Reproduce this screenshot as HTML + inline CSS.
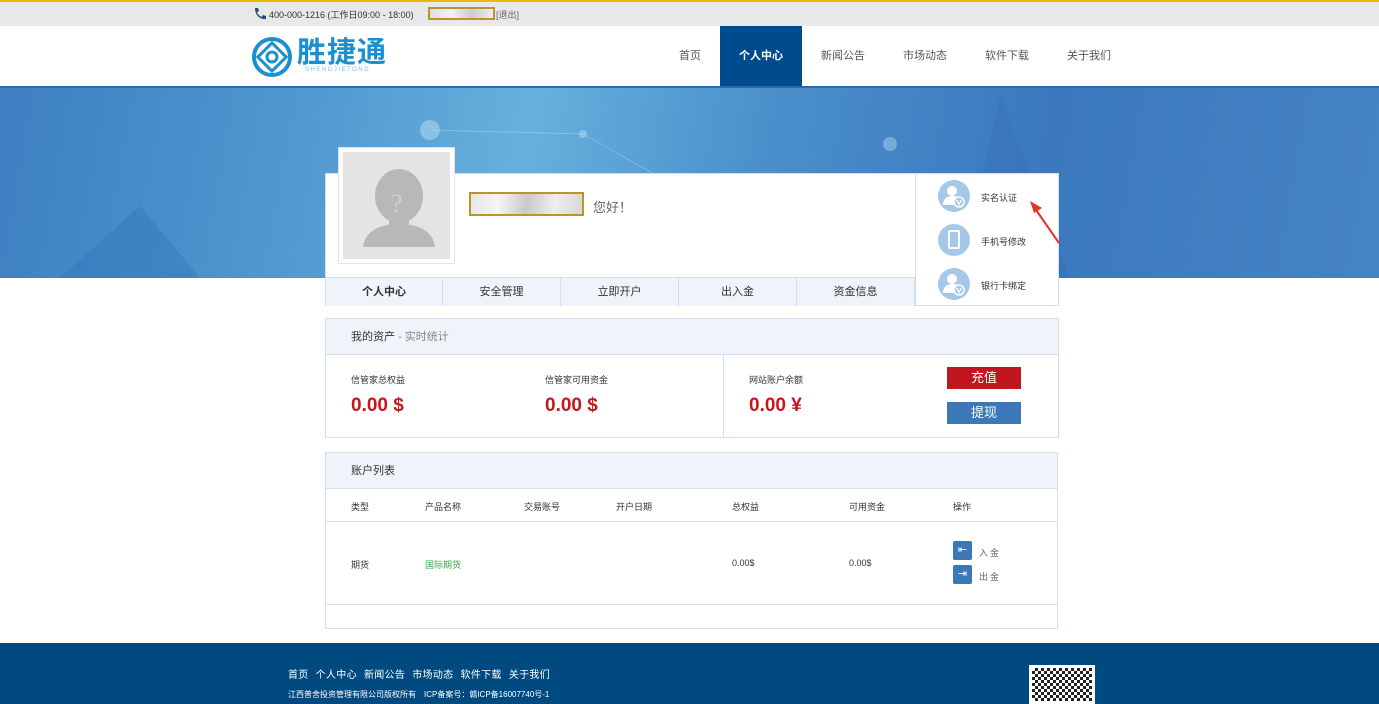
<!DOCTYPE html>
<html><head><meta charset="utf-8"><style>
*{margin:0;padding:0;box-sizing:border-box}
body{width:1379px;height:704px;overflow:hidden;font-family:"Liberation Sans","Noto Sans CJK SC",sans-serif;font-size:12px;color:#333;background:#fff;position:relative}
.abs{position:absolute}
.top{left:0;top:0;width:1379px;height:26px;background:#e8e8e8;border-top:2px solid #f2b600}
.hdr{left:0;top:26px;width:1379px;height:60px;background:#fff}
.nav{top:26px;height:60px;line-height:60px;font-size:11px;color:#555;text-align:center;width:82px}
.banner{left:0;top:86px;width:1379px;height:192px;background:linear-gradient(100deg,#3d7fc0 0%,#4f95cf 20%,#67b0dc 38%,#4a8fcb 55%,#3b78bd 75%,#4584c4 100%);border-top:2px solid #2c68a8}
.card{border:1px solid #d3e0ec;background:#fff}
.tab{top:277px;height:29px;width:118px;line-height:28px;text-align:center;font-size:11px;color:#333;background:#eef4f9;border-top:1px solid #d3e0ec;border-right:1px solid #d3e0ec}
.ic{width:32px;height:32px;border-radius:50%;background:#a6c8e8;left:938px}
.lbl{left:981px;font-size:9px;color:#333}
.h{background:#eef4f9;border-bottom:1px solid #d3e0ec;height:36px;line-height:36px;padding-left:25px;font-size:11px;color:#333}
.red{color:#c8161d;font-size:19px;font-weight:bold}
.sm{font-size:9px;color:#333}
.foot{left:0;top:643px;width:1379px;height:61px;background:#004a80}
</style></head><body>
<div class="abs top"></div>
<svg class="abs" style="left:253px;top:7px" width="14" height="14" viewBox="0 0 14 14"><path d="M2 1l3 0 1 3-2 1.5c1 2 2.5 3.5 4.5 4.5L10 8l3 1 0 3c-6 1-11-4-11-11z" fill="#2a4c7a"/></svg>
<div class="abs" style="left:269px;top:8px;font-size:9px;color:#333">400-000-1216 (工作日09:00 - 18:00)</div>
<div class="abs" style="left:428px;top:7px;width:67px;height:13px;border:2px solid #b8962a;background:linear-gradient(90deg,#ddd,#f2f2f2,#ccc,#eee)"></div>
<div class="abs" style="left:496px;top:8px;font-size:9px;color:#666">[退出]</div>
<div class="abs hdr"></div>
<svg class="abs" style="left:252px;top:37px" width="40" height="40" viewBox="0 0 40 40"><circle cx="20" cy="20" r="18" fill="none" stroke="#1b8fd2" stroke-width="4"/><rect x="10" y="10" width="20" height="20" transform="rotate(45 20 20)" fill="none" stroke="#1b8fd2" stroke-width="3"/><circle cx="20" cy="20" r="5" fill="none" stroke="#1b8fd2" stroke-width="3"/></svg>
<div class="abs" style="left:297px;top:36px;font-size:29px;font-weight:bold;color:#1b8fd2;letter-spacing:1px;line-height:34px">胜捷通</div>
<div class="abs" style="left:305px;top:67px;font-size:6px;color:#7fbfe6;letter-spacing:1.5px">SHENGJIETONG</div>
<div class="abs nav" style="left:649px">首页</div>
<div class="abs nav" style="left:720px;background:#004a8e;color:#fff;font-weight:bold">个人中心</div>
<div class="abs nav" style="left:802px">新闻公告</div>
<div class="abs nav" style="left:884px">市场动态</div>
<div class="abs nav" style="left:966px">软件下载</div>
<div class="abs nav" style="left:1048px">关于我们</div>
<div class="abs banner"></div>
<svg class="abs" style="left:0;top:86px" width="1379" height="192"><line x1="430" y1="44" x2="583" y2="48" stroke="#9fd0ee" stroke-width="1" opacity=".6"/><line x1="583" y1="48" x2="800" y2="170" stroke="#9fd0ee" stroke-width="1" opacity=".5"/><circle cx="430" cy="44" r="10" fill="#a9d5ef" opacity=".6"/><circle cx="583" cy="48" r="4" fill="#a9d5ef" opacity=".6"/><circle cx="890" cy="58" r="7" fill="#a9d5ef" opacity=".5"/><polygon points="60,192 140,120 200,192" fill="#2f6fb4" opacity=".35"/><polygon points="1000,10 1070,192 960,192" fill="#2e69ad" opacity=".25"/></svg>
<div class="abs card" style="left:325px;top:173px;width:734px;height:133px"></div>
<div class="abs" style="left:338px;top:147px;width:117px;height:117px;background:#fff;border:1px solid #e4e4e4;padding:4px"><div style="width:107px;height:107px;background:#e4e4e4;position:relative"><svg width="107" height="107" viewBox="0 0 107 107"><ellipse cx="56" cy="44" rx="24" ry="27" fill="#b8b8b8"/><rect x="46" y="64" width="20" height="14" fill="#b8b8b8"/><path d="M20 95 C22 78 38 72 56 72 C74 72 90 78 92 95 Z" fill="#b8b8b8"/><text x="48" y="60" font-size="26" fill="#cfcfcf" font-family="Liberation Serif">?</text></svg></div></div>
<div class="abs" style="left:469px;top:192px;width:115px;height:24px;border:2px solid #b8962a;background:linear-gradient(100deg,#e6e6e6,#f5f5f5,#c9c9c9,#eee,#d6d6d6)"></div>
<div class="abs" style="left:593px;top:197px;font-size:13px;color:#666">您好！</div>
<div class="abs tab" style="left:325px;font-weight:bold;border-left:1px solid #d3e0ec">个人中心</div>
<div class="abs tab" style="left:443px">安全管理</div>
<div class="abs tab" style="left:561px">立即开户</div>
<div class="abs tab" style="left:679px">出入金</div>
<div class="abs tab" style="left:797px">资金信息</div>
<div class="abs" style="left:915px;top:173px;width:1px;height:133px;background:#d3e0ec"></div>
<svg class="abs" style="left:938px;top:180px" width="32" height="32" viewBox="0 0 32 32"><circle cx="16" cy="16" r="16" fill="#a6c8e8"/><circle cx="14" cy="11" r="5" fill="#fff"/><path d="M5 25c0-6 4-9 9-9s6 2 6 2v7z" fill="#fff"/><circle cx="21" cy="22" r="5" fill="#a6c8e8" stroke="#fff" stroke-width="1.5"/><path d="M18.5 20l2.5 4.5 2.5-4.5" fill="none" stroke="#fff" stroke-width="1.3"/></svg>
<div class="abs lbl" style="top:191px">实名认证</div>
<div class="abs ic" style="top:224px"><div style="position:absolute;left:10px;top:6px;width:12px;height:19px;border:2px solid #fff;border-radius:2px"></div></div><div class="abs lbl" style="top:235px">手机号修改</div>
<svg class="abs" style="left:938px;top:268px" width="32" height="32" viewBox="0 0 32 32"><circle cx="16" cy="16" r="16" fill="#a6c8e8"/><circle cx="14" cy="11" r="5" fill="#fff"/><path d="M5 25c0-6 4-9 9-9s6 2 6 2v7z" fill="#fff"/><circle cx="21" cy="22" r="5" fill="#a6c8e8" stroke="#fff" stroke-width="1.5"/><path d="M18.5 20l2.5 4.5 2.5-4.5" fill="none" stroke="#fff" stroke-width="1.3"/></svg>
<div class="abs lbl" style="top:279px">银行卡绑定</div>
<svg class="abs" style="left:1025px;top:198px" width="40" height="48"><line x1="34" y1="45" x2="9" y2="9" stroke="#e8312c" stroke-width="2"/><polygon points="5,3 17,10 9,15" fill="#e8312c"/></svg>
<div class="abs card" style="left:325px;top:318px;width:734px;height:120px"><div class="h">我的资产 <span style="color:#888">- 实时统计</span></div></div>
<div class="abs" style="left:723px;top:354px;width:1px;height:83px;background:#d3e0ec"></div>
<div class="abs sm" style="left:351px;top:373px">信管家总权益</div>
<div class="abs sm" style="left:545px;top:373px">信管家可用资金</div>
<div class="abs sm" style="left:749px;top:373px">网站账户余额</div>
<div class="abs red" style="left:351px;top:395px">0.00 $</div>
<div class="abs red" style="left:545px;top:395px">0.00 $</div>
<div class="abs red" style="left:749px;top:395px">0.00 ¥</div>
<div class="abs" style="left:947px;top:367px;width:74px;height:22px;background:#c1161d;color:#fff;text-align:center;line-height:22px;font-size:13px">充值</div>
<div class="abs" style="left:947px;top:402px;width:74px;height:22px;background:#3a78b8;color:#fff;text-align:center;line-height:22px;font-size:13px">提现</div>
<div class="abs card" style="left:325px;top:452px;width:733px;height:177px"><div class="h">账户列表</div></div>
<div class="abs" style="left:326px;top:521px;width:731px;height:1px;background:#d3e0ec"></div>
<div class="abs" style="left:326px;top:604px;width:731px;height:1px;background:#d3e0ec"></div>
<div class="abs sm" style="left:351px;top:500px">类型</div>
<div class="abs sm" style="left:425px;top:500px">产品名称</div>
<div class="abs sm" style="left:524px;top:500px">交易账号</div>
<div class="abs sm" style="left:616px;top:500px">开户日期</div>
<div class="abs sm" style="left:732px;top:500px">总权益</div>
<div class="abs sm" style="left:849px;top:500px">可用资金</div>
<div class="abs sm" style="left:953px;top:500px">操作</div>
<div class="abs sm" style="left:351px;top:558px">期货</div>
<div class="abs sm" style="left:425px;top:558px;color:#3aaa4a">国际期货</div>
<div class="abs sm" style="left:732px;top:558px">0.00$</div>
<div class="abs sm" style="left:849px;top:558px">0.00$</div>
<div class="abs" style="left:953px;top:541px;width:19px;height:19px;background:#3a78b8;border-radius:2px;color:#fff;font-size:11px;text-align:center;line-height:19px">⇤</div>
<div class="abs" style="left:953px;top:565px;width:19px;height:19px;background:#3a78b8;border-radius:2px;color:#fff;font-size:11px;text-align:center;line-height:19px">⇥</div>
<div class="abs sm" style="left:979px;top:546px;color:#666;letter-spacing:2px">入金</div>
<div class="abs sm" style="left:979px;top:570px;color:#666;letter-spacing:2px">出金</div>
<div class="abs foot"></div>
<div class="abs" style="left:288px;top:666px;font-size:10px;color:#fff;word-spacing:4px;letter-spacing:.3px">首页 个人中心 新闻公告 市场动态 软件下载 关于我们</div>
<div class="abs" style="left:288px;top:689px;font-size:8px;color:#fff">江西普舍投资管理有限公司版权所有　ICP备案号：赣ICP备16007740号-1</div>
<div class="abs" style="left:1029px;top:665px;width:66px;height:39px;background:#fff;padding:3px"><div style="width:100%;height:100%;background:repeating-conic-gradient(#222 0 25%,#fff 0 50%) 0 0/6px 6px"></div></div>
</body></html>
